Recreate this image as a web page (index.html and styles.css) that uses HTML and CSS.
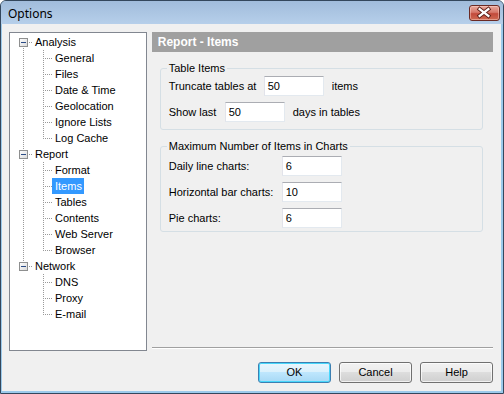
FILE: index.html
```html
<!DOCTYPE html>
<html>
<head>
<meta charset="utf-8">
<title>Options</title>
<link rel="stylesheet" href="styles.css">
</head>
<body>
<svg class="defs" width="0" height="0" aria-hidden="true">
  <defs>
    <linearGradient id="boxfill" x1="0" y1="0" x2="1" y2="1">
      <stop offset="0" stop-color="#ffffff"/>
      <stop offset="1" stop-color="#d8d8d8"/>
    </linearGradient>
    <symbol id="pipe" viewBox="0 0 20 16">
      <line x1="10.5" y1="0" x2="10.5" y2="16" class="dot"/>
    </symbol>
    <symbol id="tee" viewBox="0 0 20 16">
      <line x1="10.5" y1="0" x2="10.5" y2="16" class="dot"/>
      <line x1="12" y1="8.5" x2="20" y2="8.5" class="dot"/>
    </symbol>
    <symbol id="ell" viewBox="0 0 20 16">
      <line x1="10.5" y1="0" x2="10.5" y2="9" class="dot"/>
      <line x1="12" y1="8.5" x2="20" y2="8.5" class="dot"/>
    </symbol>
    <symbol id="rootfirst" viewBox="0 0 20 16">
      <line x1="10.5" y1="14" x2="10.5" y2="16" class="dot"/>
      <line x1="16" y1="8.5" x2="20" y2="8.5" class="dot"/>
      <rect x="6.5" y="4.5" width="8" height="8" class="box"/>
      <line x1="8" y1="8.5" x2="13" y2="8.5" class="minus"/>
    </symbol>
    <symbol id="rootmid" viewBox="0 0 20 16">
      <line x1="10.5" y1="0" x2="10.5" y2="4" class="dot"/>
      <line x1="10.5" y1="14" x2="10.5" y2="16" class="dot"/>
      <line x1="16" y1="8.5" x2="20" y2="8.5" class="dot"/>
      <rect x="6.5" y="4.5" width="8" height="8" class="box"/>
      <line x1="8" y1="8.5" x2="13" y2="8.5" class="minus"/>
    </symbol>
    <symbol id="rootlast" viewBox="0 0 20 16">
      <line x1="10.5" y1="0" x2="10.5" y2="4" class="dot"/>
      <line x1="16" y1="8.5" x2="20" y2="8.5" class="dot"/>
      <rect x="6.5" y="4.5" width="8" height="8" class="box"/>
      <line x1="8" y1="8.5" x2="13" y2="8.5" class="minus"/>
    </symbol>
  </defs>
</svg>

<div class="window">
  <div class="titlebar">
    <span class="title">Options</span>
    <div class="close">
      <svg width="31" height="16" viewBox="0 0 31 16">
        <path d="M11 4 L20 11 M20 4 L11 11" stroke="#5b1d16" stroke-width="4.2" stroke-linecap="square" fill="none"/>
        <path d="M11 4 L20 11 M20 4 L11 11" stroke="#ffffff" stroke-width="2.4" stroke-linecap="square" fill="none"/>
      </svg>
    </div>
  </div>

  <div class="client">
    <div class="main">
      <div class="tree">
        <div class="node"><svg class="cell"><use href="#rootfirst"/></svg><span class="lbl">Analysis</span></div>
        <div class="node"><svg class="cell"><use href="#pipe"/></svg><svg class="cell"><use href="#tee"/></svg><span class="lbl">General</span></div>
        <div class="node"><svg class="cell"><use href="#pipe"/></svg><svg class="cell"><use href="#tee"/></svg><span class="lbl">Files</span></div>
        <div class="node"><svg class="cell"><use href="#pipe"/></svg><svg class="cell"><use href="#tee"/></svg><span class="lbl">Date &amp; Time</span></div>
        <div class="node"><svg class="cell"><use href="#pipe"/></svg><svg class="cell"><use href="#tee"/></svg><span class="lbl">Geolocation</span></div>
        <div class="node"><svg class="cell"><use href="#pipe"/></svg><svg class="cell"><use href="#tee"/></svg><span class="lbl">Ignore Lists</span></div>
        <div class="node"><svg class="cell"><use href="#pipe"/></svg><svg class="cell"><use href="#ell"/></svg><span class="lbl">Log Cache</span></div>
        <div class="node"><svg class="cell"><use href="#rootmid"/></svg><span class="lbl">Report</span></div>
        <div class="node"><svg class="cell"><use href="#pipe"/></svg><svg class="cell"><use href="#tee"/></svg><span class="lbl">Format</span></div>
        <div class="node"><svg class="cell"><use href="#pipe"/></svg><svg class="cell"><use href="#tee"/></svg><span class="lbl selected">Items</span></div>
        <div class="node"><svg class="cell"><use href="#pipe"/></svg><svg class="cell"><use href="#tee"/></svg><span class="lbl">Tables</span></div>
        <div class="node"><svg class="cell"><use href="#pipe"/></svg><svg class="cell"><use href="#tee"/></svg><span class="lbl">Contents</span></div>
        <div class="node"><svg class="cell"><use href="#pipe"/></svg><svg class="cell"><use href="#tee"/></svg><span class="lbl">Web Server</span></div>
        <div class="node"><svg class="cell"><use href="#pipe"/></svg><svg class="cell"><use href="#ell"/></svg><span class="lbl">Browser</span></div>
        <div class="node"><svg class="cell"><use href="#rootlast"/></svg><span class="lbl">Network</span></div>
        <div class="node"><span class="cell blank"></span><svg class="cell"><use href="#tee"/></svg><span class="lbl">DNS</span></div>
        <div class="node"><span class="cell blank"></span><svg class="cell"><use href="#tee"/></svg><span class="lbl">Proxy</span></div>
        <div class="node"><span class="cell blank"></span><svg class="cell"><use href="#ell"/></svg><span class="lbl">E-mail</span></div>
      </div>

      <div class="panel">
        <div class="header">Report - Items</div>

        <div class="group g1">
          <div class="gtitle">Table Items</div>
          <div class="frow first1">
            <span class="flabel w95">Truncate tables at</span>
            <span class="input">50</span>
            <span class="suffix">items</span>
          </div>
          <div class="frow">
            <span class="flabel w56">Show last</span>
            <span class="input">50</span>
            <span class="suffix">days in tables</span>
          </div>
        </div>

        <div class="group g2">
          <div class="gtitle">Maximum Number of Items in Charts</div>
          <div class="frow first2">
            <span class="flabel w113">Daily line charts:</span>
            <span class="input">6</span>
          </div>
          <div class="frow">
            <span class="flabel w113">Horizontal bar charts:</span>
            <span class="input">10</span>
          </div>
          <div class="frow">
            <span class="flabel w113">Pie charts:</span>
            <span class="input">6</span>
          </div>
        </div>

        <div class="sep"></div>
      </div>
    </div>

    <div class="buttons">
      <div class="btn default">OK</div>
      <div class="btn">Cancel</div>
      <div class="btn">Help</div>
    </div>
  </div>
</div>
</body>
</html>
```

FILE: styles.css
```css
* {
  box-sizing: border-box;
}

html, body {
  margin: 0;
  padding: 0;
  background: #ffffff;
}

body {
  font-family: "Liberation Sans", Arial, sans-serif;
  font-size: 11px;
  color: #000000;
}

.defs {
  position: absolute;
  width: 0;
  height: 0;
  overflow: hidden;
}

.dot {
  stroke: #9a9a9a;
  stroke-width: 1;
  stroke-dasharray: 1 1;
  shape-rendering: crispEdges;
}

.box {
  stroke: #8e8f8f;
  stroke-width: 1;
  fill: url(#boxfill);
  shape-rendering: crispEdges;
}

.minus {
  stroke: #2b4c86;
  stroke-width: 1;
  shape-rendering: crispEdges;
}

.window {
  width: 504px;
  height: 394px;
  border: 1px solid #34475c;
  border-radius: 6px 6px 0 0;
  background: #9ccaeb;
  display: flex;
  flex-direction: column;
  overflow: hidden;
}

.titlebar {
  height: 23px;
  flex: none;
  display: flex;
  align-items: flex-start;
  justify-content: space-between;
  background: linear-gradient(#a1bcdb, #b6cfea);
  padding-left: 7px;
}

.title {
  font-family: "Noto Sans", "Open Sans", sans-serif;
  font-size: 12px;
  line-height: 16px;
  margin-top: 5px;
  color: #000000;
}

.close {
  width: 31px;
  height: 16px;
  margin-top: 4px;
  margin-right: 3px;
  border: 1px solid #6b2a24;
  border-radius: 3px;
  background: linear-gradient(#e9a99d 0%, #d7786a 45%, #c24a3b 55%, #cf6a52 100%);
  box-shadow: inset 0 0 0 1px rgba(255, 220, 210, 0.45);
  display: flex;
}

.close svg {
  margin: -1px 0 0 -1px;
}

.client {
  flex: 1;
  margin: 0 2px 2px 1px;
  background: #f0f0f0;
  padding: 8px 8px 0 7px;
  display: flex;
  flex-direction: column;
}

.main {
  display: flex;
  gap: 5px;
  height: 319px;
}

.tree {
  width: 138px;
  height: 319px;
  background: #ffffff;
  border: 1px solid #828790;
  padding: 1px 0 0 3px;
  display: flex;
  flex-direction: column;
}

.node {
  height: 16px;
  display: flex;
  align-items: center;
  flex: none;
}

.cell {
  width: 20px;
  height: 16px;
  flex: none;
  display: block;
}

.lbl {
  line-height: 16px;
  height: 16px;
  padding: 0 2px;
  white-space: nowrap;
}

.lbl.selected {
  background: #3399ff;
  color: #ffffff;
  margin-left: -1px;
  padding: 0 2px 0 3px;
}

.panel {
  width: 342px;
  height: 319px;
  display: flex;
  flex-direction: column;
}

.header {
  height: 20px;
  flex: none;
  background: #a0a0a0;
  color: #ffffff;
  font-weight: bold;
  font-size: 12px;
  line-height: 20px;
  padding-left: 6px;
}

.group {
  margin: 16px 10px 0 8px;
  border: 1px solid #d5dfe5;
  border-radius: 3px;
  padding: 0 8px 7px 8px;
  display: flex;
  flex-direction: column;
  gap: 6px;
}

.g2 {
  padding-bottom: 3px;
}

.gtitle {
  height: 13px;
  line-height: 13px;
  margin-top: -7px;
  margin-left: -2px;
  margin-bottom: -5px;
  padding: 0 2px;
  background: #f0f0f0;
  align-self: flex-start;
  white-space: nowrap;
}

.frow {
  display: flex;
  align-items: center;
  height: 20px;
}

.first1 {
  margin-top: 0;
}

.first2 {
  margin-top: 2px;
}

.flabel {
  flex: none;
  white-space: nowrap;
}

.w95 { width: 95px; }
.w56 { width: 56px; }
.w113 { width: 113px; }

.input {
  width: 60px;
  height: 20px;
  flex: none;
  background: #ffffff;
  border: 1px solid #e3e9ef;
  border-top-color: #abadb3;
  border-left-color: #e2e3ea;
  padding-left: 3px;
  line-height: 18px;
}

.suffix {
  margin-left: 8px;
  white-space: nowrap;
}

.sep {
  margin-top: auto;
  margin-bottom: 2px;
  height: 2px;
  border-top: 1px solid #a0a0a0;
  border-bottom: 1px solid #ffffff;
}

.buttons {
  margin-top: 11px;
  display: flex;
  justify-content: flex-end;
  gap: 8px;
}

.btn {
  width: 73px;
  height: 21px;
  border: 1px solid #707070;
  border-radius: 3px;
  background: linear-gradient(#f2f2f2 0%, #ebebeb 50%, #dddddd 50%, #cfcfcf 100%);
  box-shadow: inset 0 0 0 1px rgba(255, 255, 255, 0.7);
  text-align: center;
  line-height: 19px;
}

.btn.default {
  border-color: #3c7fb1;
  background: linear-gradient(#eaf6fd 0%, #d9f0fc 50%, #bee6fd 50%, #a7d9f5 100%);
  box-shadow: inset 0 0 0 1px #48d7fb;
}
```
